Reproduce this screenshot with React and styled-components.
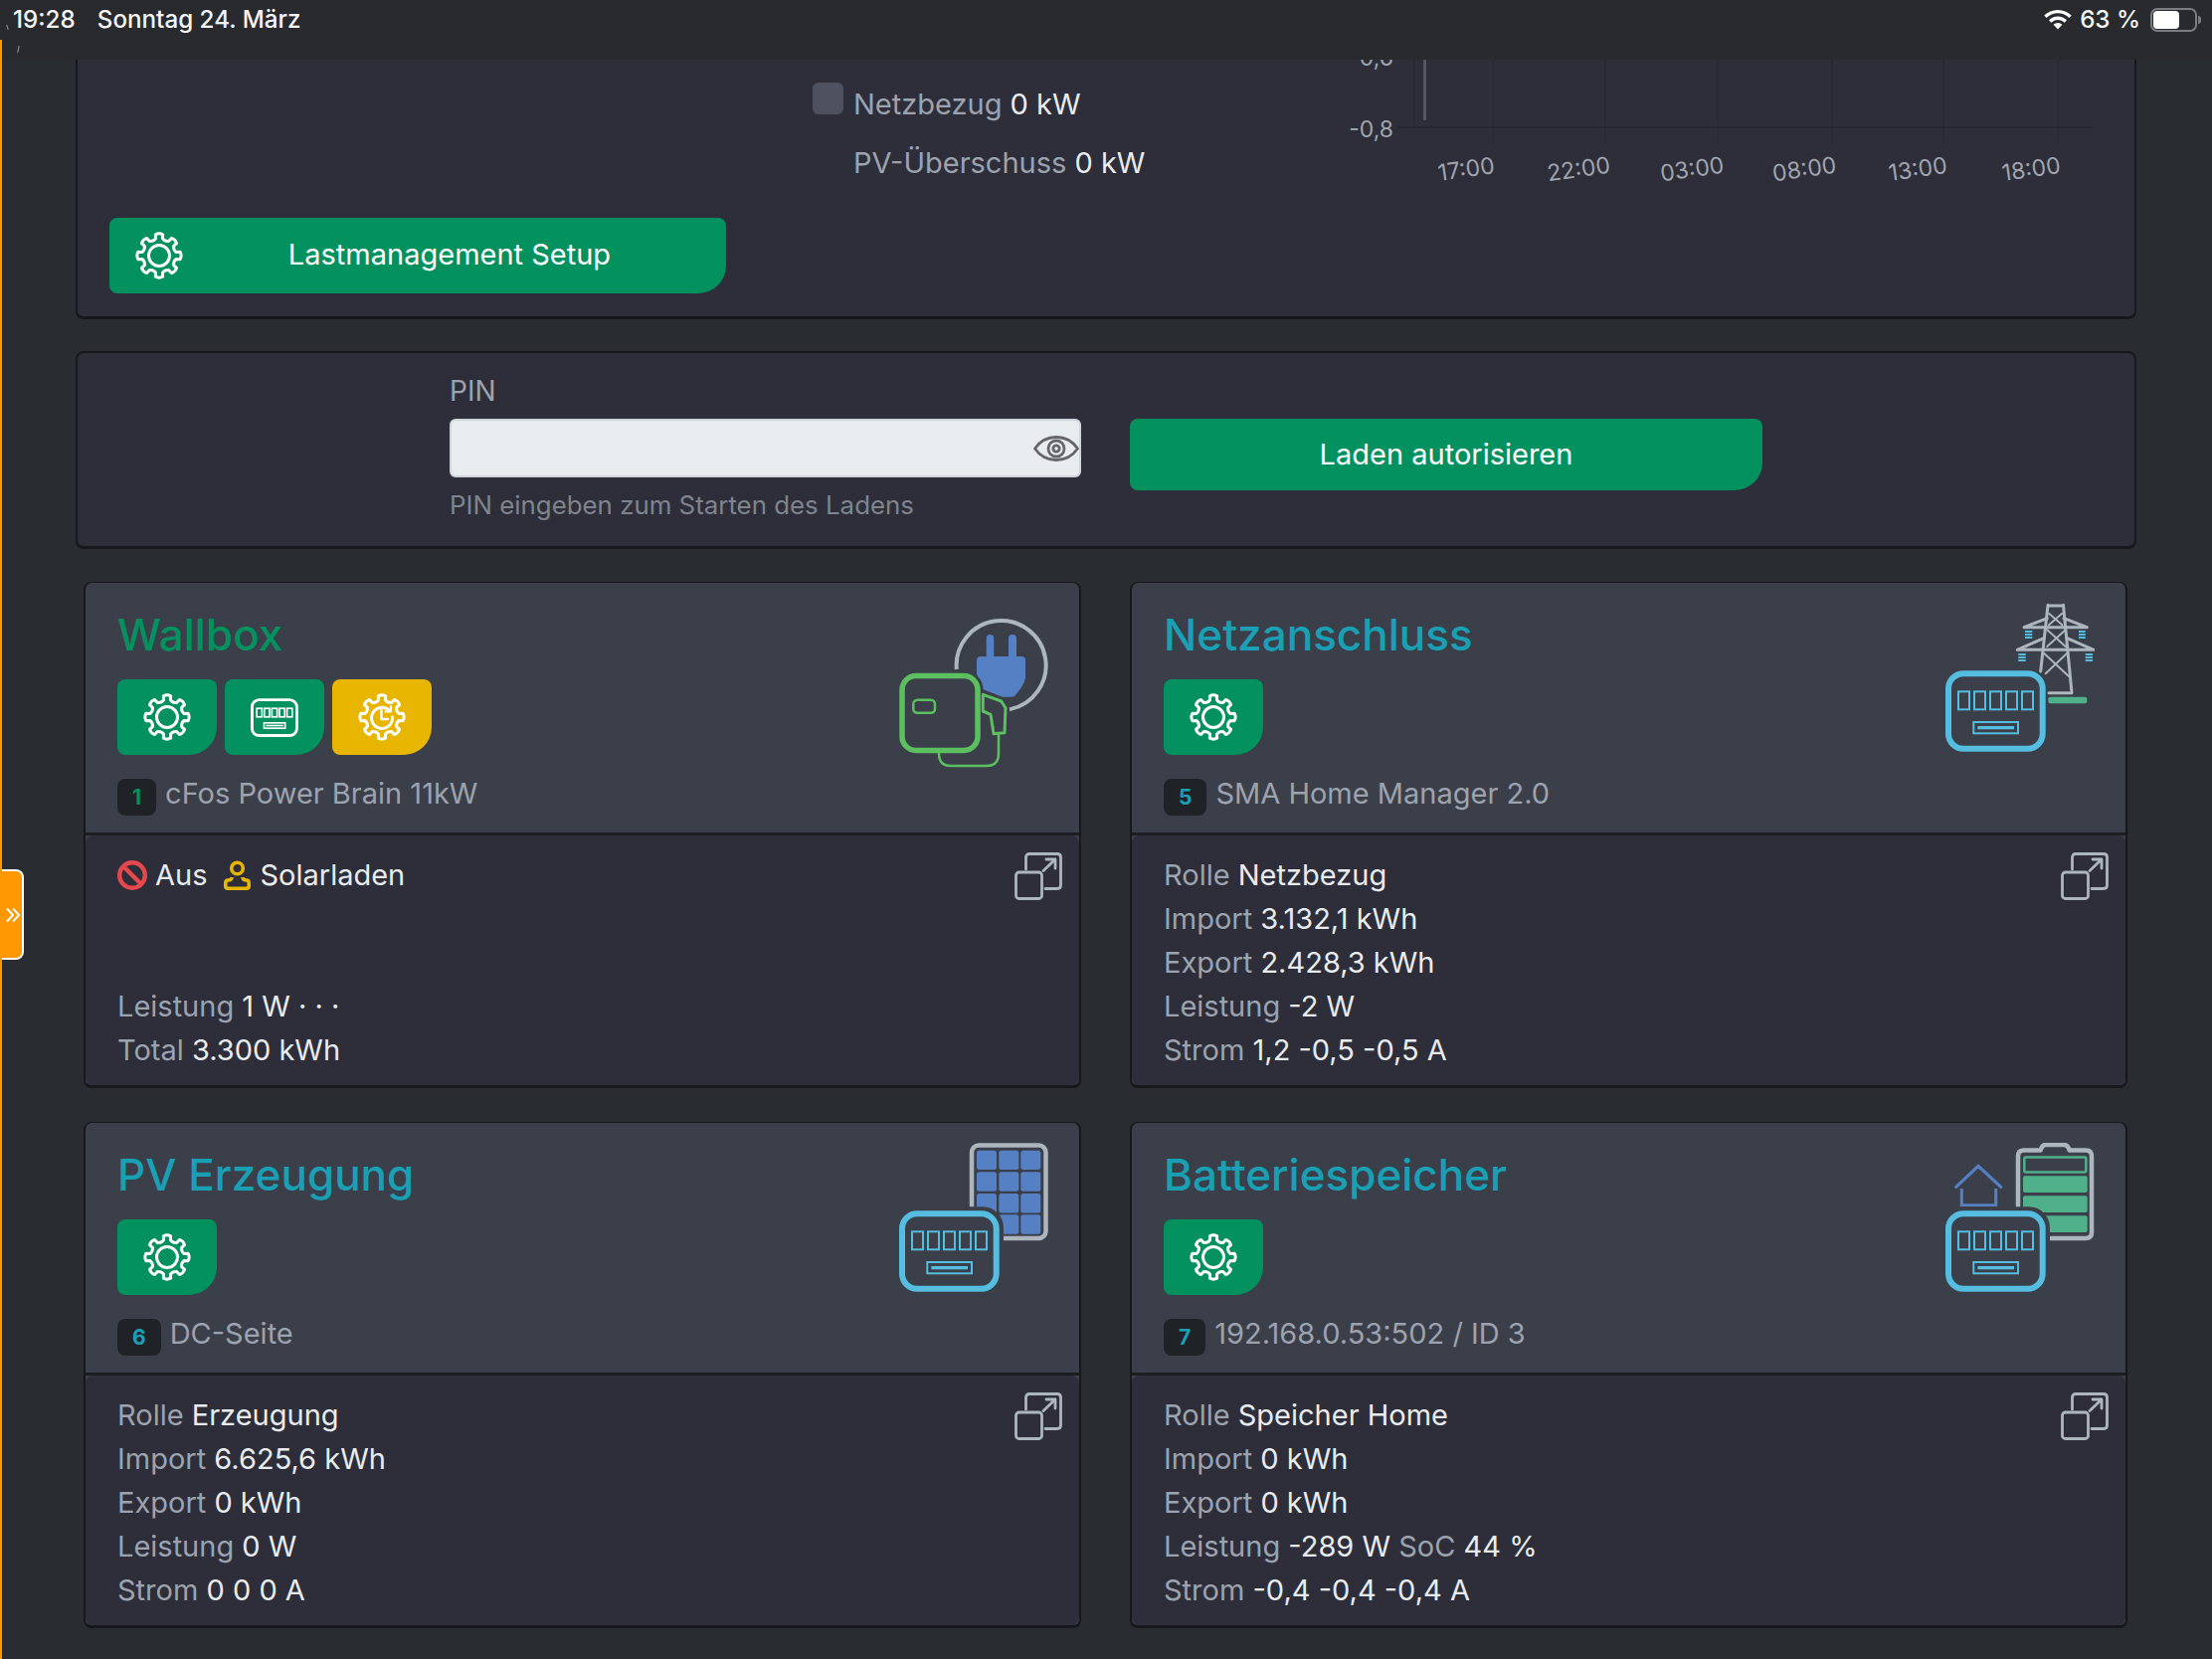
import React from 'react';
import styled, { createGlobalStyle } from 'styled-components';

const GREEN = '#03915f';
const TEAL = '#1aa0b5';
const YELLOW = '#e8b600';
const HEADER_BG = '#3b3f4a';
const GRAY_ICON = '#adb5bd';
const METER_BLUE = '#55bde0';
const PLUG_BLUE = '#5580c4';
const BATTERY_GREEN = '#50b08a';
const EDGE = '#16181b';

const GlobalStyle = createGlobalStyle`
  html, body {
    margin: 0;
    background: #292c30;
    color: #e9ecef;
    font-family: Inter, "Noto Sans", "Liberation Sans", sans-serif;
    font-size: 29px;
    line-height: 44px;
  }
  * {
    box-sizing: border-box;
  }
`;

const StatusBar = styled.header`
  position: relative;
  height: 60px;
  background: #282a2e;
  padding: 0 15px 20px 13px;
  display: flex;
  align-items: center;
  justify-content: space-between;
  color: #f5f5f5;
  font-size: 24.2px;
  line-height: 40px;
  font-weight: 500;

  &::before,
  &::after {
    content: '';
    position: absolute;
    width: 1px;
    background: #9a9da1;
  }
  &::before {
    left: 7px;
    top: 25px;
    height: 5px;
    transform: rotate(-18deg);
  }
  &::after {
    left: 18px;
    top: 46px;
    height: 7px;
    transform: rotate(12deg);
  }
`;

const StatusGroup = styled.div`
  display: flex;
  align-items: center;
  gap: ${props => props.$gap}px;
`;

const BatteryShell = styled.div`
  position: relative;
  width: 47px;
  height: 24px;
  margin-left: 2px;
  border: 2px solid #7b7d81;
  border-radius: 7px;
  padding: 1px;

  &::after {
    content: '';
    position: absolute;
    right: -6px;
    top: 6px;
    width: 3px;
    height: 8px;
    border-radius: 0 3px 3px 0;
    background: #7b7d81;
  }
`;

const BatteryFill = styled.div`
  width: 63%;
  height: 100%;
  background: #fff;
  border-radius: 4px;
`;

const EdgeLine = styled.div`
  position: fixed;
  left: 0;
  top: 40px;
  bottom: 0;
  width: 2px;
  background: #ff9800;
  z-index: 3;
`;

const SidebarToggle = styled.div`
  position: fixed;
  left: 2px;
  top: 874px;
  width: 22px;
  height: 91px;
  background: #ff9800;
  border: 2px solid #fff;
  border-left: none;
  border-radius: 0 8px 8px 0;
  display: flex;
  align-items: center;
  justify-content: flex-end;
  padding-right: 1px;
  z-index: 3;
`;

const Main = styled.main`
  padding: 0 76px 32px;
`;

const Panel = styled.section`
  background: #2d2e39;
  border: 2px solid ${EDGE};
  border-top-width: ${props => (props.$clipped ? 0 : 2)}px;
  border-bottom-width: 3px;
  border-radius: ${props => (props.$clipped ? '0 0 8px 8px' : '8px')};
`;

const LoadPanel = styled(Panel)`
  height: 261px;
  padding: 0 16px 0 32px;
  margin-bottom: 32px;
`;

const LoadTop = styled.div`
  display: grid;
  grid-template-columns: 1230px 790px;
  height: 159px;
`;

const Legend = styled.div`
  padding: 23px 0 0 707px;
`;

const LegendRow = styled.div`
  display: flex;
  gap: 10px;
  margin-bottom: 15px;
`;

const LegendSwatch = styled.span`
  width: 31px;
  height: 32px;
  border-radius: 6px;
  background: ${props => props.$color};
`;

const Label = styled.span`
  color: #9ca3af;
`;

const Chart = styled.svg`
  display: block;
`;

const AxisLabel = styled.text`
  fill: #a0a5ae;
  font-size: 23px;
`;

const SetupButton = styled.div`
  width: 620px;
  height: 76px;
  background: ${GREEN};
  border-radius: 8px 8px 28px 8px;
  color: #fff;
  display: flex;
  align-items: center;
  padding: 0 10px 0 26px;
`;

const SetupText = styled.span`
  flex: 1;
  text-align: center;
  padding-bottom: 3px;
`;

const PinPanel = styled(Panel)`
  height: 199px;
  padding: 16px 0 0 374px;
  margin-bottom: 33px;
  display: flex;
  gap: 49px;
`;

const PinForm = styled.div`
  width: 635px;
`;

const PinLabel = styled.div`
  color: #9ca3af;
  font-size: 28px;
  margin-bottom: 6px;
`;

const PinInput = styled.div`
  height: 59px;
  background: #e9ecef;
  border: 2px solid #ced4da;
  border-radius: 6px;
  display: flex;
  align-items: center;
  justify-content: flex-end;
`;

const PinHint = styled.div`
  margin-top: 8px;
  color: #7f858e;
  font-size: 25.85px;
  line-height: 40px;
`;

const AuthButton = styled.div`
  width: 636px;
  height: 72px;
  margin-top: 50px;
  background: ${GREEN};
  border-radius: 8px 8px 28px 8px;
  color: #fff;
  display: flex;
  align-items: center;
  justify-content: center;
`;

const CardGrid = styled.div`
  display: grid;
  grid-template-columns: 1003px 1003px;
  column-gap: 49px;
  row-gap: 34px;
  margin: 0 9px 0 8px;
`;

const Card = styled.article`
  height: 509px;
  background: ${HEADER_BG};
  border: 2px solid ${EDGE};
  border-top-width: 1px;
  border-bottom-width: 3px;
  border-radius: 8px;
  display: flex;
  flex-direction: column;
`;

const CardHeader = styled.div`
  height: 254px;
  flex: none;
  padding: 20px 31px 0 32px;
  display: flex;
  justify-content: space-between;
  align-items: flex-start;
  border-bottom: 3px solid #1b1d21;
`;

const CardTitle = styled.h2`
  margin: 6px 0 18px;
  font-size: 44px;
  line-height: 53px;
  font-weight: 500;
  color: ${props => props.$color};
`;

const ButtonRow = styled.div`
  display: flex;
  gap: 8px;
`;

const IconButton = styled.div`
  width: 100px;
  height: 76px;
  background: ${props => props.$color};
  border-radius: 8px 8px 28px 8px;
  color: #fff;
  display: flex;
  align-items: center;
  justify-content: center;
`;

const DeviceRow = styled.div`
  display: flex;
  gap: 9px;
  margin-top: 17px;
  color: #9ca3af;
`;

const IdBadge = styled.span`
  margin-top: 7px;
  height: 37px;
  padding: 0 15px;
  background: #1f2328;
  border-radius: 8px;
  color: ${props => props.$color};
  font-size: 21px;
  line-height: 37px;
  font-weight: 700;
`;

const CardBody = styled.div`
  flex: 1;
  background: #2d2e39;
  border-radius: 8px;
  padding: 18px 17px 0 32px;
  display: flex;
  justify-content: space-between;
  align-items: flex-start;
`;

const Lines = styled.div`
  display: flex;
  flex-direction: column;
  height: 220px;
`;

const StateLine = styled.div`
  display: flex;
  align-items: center;
  height: 44px;
`;

const StateIcon = styled.svg`
  display: block;
  margin-right: ${props => props.$gap}px;
`;

const StateText = styled.span`
  margin-right: ${props => props.$gap}px;
`;

const Filler = styled.div`
  flex: 1;
`;

const Icon = styled.svg`
  display: block;
  flex: none;
`;

const PopoutIcon = styled(Icon)`
  margin-top: -1px;
`;

const gearPath = (cx, cy, outer, root, n = 8) => {
  const step = (Math.PI * 2) / n;
  const pt = (r, a) => `${(cx + r * Math.cos(a)).toFixed(2)} ${(cy + r * Math.sin(a)).toFixed(2)}`;
  let d = '';
  for (let i = 0; i < n; i++) {
    const a = i * step - Math.PI / 2;
    d += `${i ? 'L' : 'M'}${pt(root, a - 0.2)} L${pt(outer, a - 0.17)} Q${pt(outer + 1.6, a)} ${pt(outer, a + 0.17)} L${pt(root, a + 0.2)} `;
    d += `Q${pt(root - 2.2, a + step / 2)} ${pt(root, a + step - 0.2)} `;
  }
  return d + 'Z';
};

const GearIcon = () => (
  <Icon width="48" height="48" viewBox="0 0 48 48" fill="none" stroke="currentColor" strokeWidth="3" strokeLinejoin="round">
    <path d={gearPath(24, 24, 21.5, 17.5)} />
    <circle cx="24" cy="24" r="10.5" />
  </Icon>
);

const GearClockIcon = () => (
  <Icon width="48" height="48" viewBox="0 0 48 48" fill="none" stroke="currentColor" strokeWidth="3" strokeLinejoin="round" strokeLinecap="round">
    <path d={gearPath(24, 24, 21.5, 17.5)} />
    <path d="M31.5 17.5 A10.5 10.5 0 1 0 34.5 24" />
    <path d="M33 13 V18.5 H27.5" strokeWidth="2.2" />
    <path d="M23.5 17 V26 H30" strokeWidth="2.4" />
  </Icon>
);

const MeterShape = ({ color, halo, digit = 2, y = 0 }) => (
  <g transform={`translate(0 ${y})`} fill="none" stroke={color}>
    {halo && <rect x="-1" y="-1" width="103" height="83" rx="18" fill={HEADER_BG} stroke={HEADER_BG} strokeWidth="6" />}
    <rect x="3" y="3" width="94.7" height="75.4" rx="15" strokeWidth="6" />
    {[13, 29, 45, 61, 77].map(x => (
      <rect key={x} x={x} y="21" width="11" height="18" strokeWidth={digit} />
    ))}
    <rect x="28.3" y="51.7" width="44.7" height="11.3" strokeWidth={digit} />
    <rect x="32.3" y="55.7" width="36.7" height="3.3" fill={color} stroke="none" />
  </g>
);

const SmallMeterIcon = () => (
  <Icon width="48" height="39" viewBox="0 0 101 81">
    <MeterShape color="#fff" digit={3.5} />
  </Icon>
);

const PopIcon = () => (
  <PopoutIcon width="48" height="48" viewBox="0 0 48 48" fill="none" stroke={GRAY_ICON} strokeWidth="2.8" strokeLinecap="round" strokeLinejoin="round">
    <rect x="1.5" y="20" width="26" height="26.5" rx="3" />
    <path d="M11.5 17 V5 Q11.5 1.5 15 1.5 H43 Q46.5 1.5 46.5 5 V33 Q46.5 36.5 43 36.5 H31" />
    <path d="M29 18.5 L41 7 M32 7 H41 V16" />
  </PopoutIcon>
);

const WallboxIcon = () => (
  <Icon width="150" height="170" viewBox="0 0 150 170" fill="none">
    <path d="M57.8 67 A45 45 0 1 1 111 107.2" stroke={GRAY_ICON} strokeWidth="4" />
    <rect x="87.7" y="32" width="7.6" height="26" rx="3.8" fill={PLUG_BLUE} />
    <rect x="110" y="32" width="8" height="26" rx="4" fill={PLUG_BLUE} />
    <path d="M82 54 H123 Q127 54 127 58 V76 Q125 84 116 94 Q114 95 104 94.7 L84 87 L78 72 V58 Q78 54 82 54 Z" fill={PLUG_BLUE} />
    <rect x="3" y="73.5" width="76" height="75" rx="14" stroke={HEADER_BG} strokeWidth="11" />
    <rect x="3" y="73.5" width="76" height="75" rx="14" stroke="#5cbf60" strokeWidth="5.5" fill={HEADER_BG} />
    <rect x="14.3" y="97.7" width="21.7" height="13" rx="4" stroke="#5cbf60" strokeWidth="2.5" />
    <path d="M84.3 92.3 L102.7 99 L107 105.7 L106 130.7 L95 131.7 L92 112.3 L84.3 109 Z" fill={HEADER_BG} stroke="#5cbf60" strokeWidth="3" strokeLinejoin="round" />
    <path d="M100 132 V152 Q100 164 88 164 H52 Q40 164 40 152 V150" stroke="#5cbf60" strokeWidth="2.5" />
  </Icon>
);

const GridIcon = () => (
  <Icon width="150" height="150" viewBox="0 0 150 150" fill="none">
    <g stroke={GRAY_ICON} strokeWidth="3" strokeLinecap="round" strokeLinejoin="round">
      <path d="M104 3 H117.5" />
      <path d="M103 2.3 L95.7 69 M118.5 2.3 L127 90.7 H104" />
      <path d="M102.3 15.7 L79 24.7 H142.3 L119 15.7" />
      <path d="M99 35.7 L72.3 47.3 H149 L122.3 35.7" />
      <path d="M104 10.7 L117.3 22.3 M117.3 10.7 L104 22.3" strokeWidth="2" />
      <path d="M102.3 27.3 L120.7 44 M120.7 27.3 L102.3 44" strokeWidth="2" />
      <path d="M99 50.7 L124 74 M122.3 50.7 L100.7 71.3" strokeWidth="2" />
    </g>
    <g stroke={METER_BLUE} strokeWidth="1.8">
      {[[80, 87.3, 29], [134, 140.7, 29], [73.3, 80.7, 52], [140.7, 148, 52]].map(([a, b, y]) => (
        <path key={a} d={`M${a} ${y} H${b} M${a} ${y + 3} H${b} M${a} ${y + 6} H${b}`} />
      ))}
    </g>
    <rect x="103.3" y="94.7" width="39" height="6.6" rx="2" fill={BATTERY_GREEN} />
    <MeterShape color={METER_BLUE} y={68.3} />
  </Icon>
);

const SolarIcon = () => (
  <Icon width="150" height="150" viewBox="0 0 150 150" fill="none">
    <rect x="73" y="2.5" width="74.5" height="93.5" rx="7" stroke={GRAY_ICON} strokeWidth="4.5" />
    {[78, 100.3, 122.3].map(x =>
      [7.7, 29.3, 51, 72.3].map(y => (
        <rect key={`${x}-${y}`} x={x} y={y} width="20" height="19.4" rx="2.5" fill={PLUG_BLUE} />
      ))
    )}
    <MeterShape color={METER_BLUE} halo y={68.3} />
  </Icon>
);

const BatteryIcon = () => (
  <Icon width="150" height="150" viewBox="0 0 150 150" fill="none">
    <path d="M95.7 7.5 Q97 2 101 2 H119 Q123 2 124.7 7.5 H141 Q147 7.5 147 13.5 V90 Q147 96 141 96 H79 Q73 96 73 90 V13.5 Q73 7.5 79 7.5 Z" stroke={GRAY_ICON} strokeWidth="4.5" strokeLinejoin="round" />
    <rect x="79.3" y="14.5" width="62" height="15" rx="1.5" stroke={BATTERY_GREEN} strokeWidth="2.5" />
    {[33.3, 53.3, 73.3].map(y => (
      <rect key={y} x="78" y={y} width="64.7" height="16.7" rx="2" fill={BATTERY_GREEN} />
    ))}
    <path d="M10.7 44.3 L33 23.3 L55.7 44.3" stroke={PLUG_BLUE} strokeWidth="3.2" strokeLinecap="round" strokeLinejoin="round" />
    <path d="M16.3 46 V62.7 H50.7 V46" stroke={PLUG_BLUE} strokeWidth="3" />
    <MeterShape color={METER_BLUE} halo y={68.3} />
  </Icon>
);

const WifiIcon = () => (
  <Icon width="28" height="20" viewBox="0 0 28 20" fill="#fff">
    <path d="M14 0 C8.6 0 3.8 2.1 0.3 5.6 L2.6 8 C5.5 5.1 9.5 3.3 14 3.3 C18.5 3.3 22.5 5.1 25.4 8 L27.7 5.6 C24.2 2.1 19.4 0 14 0 Z" />
    <path d="M14 6.6 C10.5 6.6 7.3 8 5 10.3 L7.3 12.7 C9 11 11.4 9.9 14 9.9 C16.6 9.9 19 11 20.7 12.7 L23 10.3 C20.7 8 17.5 6.6 14 6.6 Z" />
    <path d="M14 13 C12.3 13 10.8 13.7 9.6 14.8 L14 19.6 L18.4 14.8 C17.2 13.7 15.7 13 14 13 Z" />
  </Icon>
);

const EyeIcon = () => (
  <Icon width="46" height="26" viewBox="0 0 46 26" fill="none" stroke="#66666a" strokeWidth="2.8">
    <path d="M1.5 13 C7 5 14 1.5 23 1.5 C32 1.5 39 5 44.5 13 C39 21 32 24.5 23 24.5 C14 24.5 7 21 1.5 13 Z" strokeLinejoin="round" />
    <circle cx="23" cy="13" r="8" />
    <circle cx="23" cy="13" r="3.2" />
  </Icon>
);

const ChevronsIcon = () => (
  <Icon width="15" height="14" viewBox="0 0 15 14" fill="none" stroke="#fff" strokeWidth="2" strokeLinecap="round" strokeLinejoin="round">
    <path d="M1.5 1 L7 7 L1.5 13 M7.5 1 L13 7 L7.5 13" />
  </Icon>
);

const LoadChart = () => (
  <Chart width="790" height="159" viewBox="0 0 790 159" fill="none">
    <path d="M82 0 V68" stroke="#292a33" strokeWidth="1.5" />
    {[161, 274, 387, 502, 614, 729].map(x => (
      <path key={x} d={`M${x} 0 V83`} stroke="#292a33" strokeWidth="1.5" />
    ))}
    <path d="M66 68 H763" stroke="#26272f" strokeWidth="2" />
    <rect x="91" y="0" width="3" height="61" fill="#55565f" />
    <AxisLabel x="61" y="6" textAnchor="end">-0,6</AxisLabel>
    <AxisLabel x="61" y="78" textAnchor="end">-0,8</AxisLabel>
    {[['17:00', 134], ['22:00', 247], ['03:00', 361], ['08:00', 474], ['13:00', 588], ['18:00', 702]].map(([t, x]) => (
      <AxisLabel key={t} x={x} y="118" textAnchor="middle" transform={`rotate(-8 ${x} 109)`}>{t}</AxisLabel>
    ))}
  </Chart>
);

const Row = ({ label, children }) => (
  <div>
    <Label>{label}</Label> {children}
  </div>
);

const DeviceCard = ({ title, color, id, device, icon, buttons, children }) => (
  <Card>
    <CardHeader>
      <div>
        <CardTitle $color={color}>{title}</CardTitle>
        <ButtonRow>{buttons}</ButtonRow>
        <DeviceRow>
          <IdBadge $color={color}>{id}</IdBadge>
          {device}
        </DeviceRow>
      </div>
      {icon}
    </CardHeader>
    <CardBody>
      <Lines>{children}</Lines>
      <PopIcon />
    </CardBody>
  </Card>
);

const App = () => (
  <>
    <GlobalStyle />
    <EdgeLine />
    <SidebarToggle>
      <ChevronsIcon />
    </SidebarToggle>
    <StatusBar>
      <StatusGroup $gap={22}>
        <span>19:28</span>
        <span>Sonntag 24. März</span>
      </StatusGroup>
      <StatusGroup $gap={8}>
        <WifiIcon />
        <span>63 %</span>
        <BatteryShell>
          <BatteryFill />
        </BatteryShell>
      </StatusGroup>
    </StatusBar>
    <Main>
      <LoadPanel $clipped>
        <LoadTop>
          <Legend>
            <LegendRow>
              <LegendSwatch $color="#4f515e" />
              <Row label="Netzbezug">0 kW</Row>
            </LegendRow>
            <LegendRow>
              <LegendSwatch $color="transparent" />
              <Row label="PV-Überschuss">0 kW</Row>
            </LegendRow>
          </Legend>
          <LoadChart />
        </LoadTop>
        <SetupButton>
          <GearIcon />
          <SetupText>Lastmanagement Setup</SetupText>
        </SetupButton>
      </LoadPanel>

      <PinPanel>
        <PinForm>
          <PinLabel>PIN</PinLabel>
          <PinInput>
            <EyeIcon />
          </PinInput>
          <PinHint>PIN eingeben zum Starten des Ladens</PinHint>
        </PinForm>
        <AuthButton>Laden autorisieren</AuthButton>
      </PinPanel>

      <CardGrid>
        <DeviceCard
          title="Wallbox"
          color={GREEN}
          id="1"
          device="cFos Power Brain 11kW"
          icon={<WallboxIcon />}
          buttons={
            <>
              <IconButton $color={GREEN}><GearIcon /></IconButton>
              <IconButton $color={GREEN}><SmallMeterIcon /></IconButton>
              <IconButton $color={YELLOW}><GearClockIcon /></IconButton>
            </>
          }
        >
          <StateLine>
            <StateIcon $gap={8} width="30" height="30" viewBox="0 0 30 30" fill="none" stroke="#e5484d" strokeWidth="4.4">
              <circle cx="15" cy="15" r="12.8" />
              <path d="M6 6 L24 24" />
            </StateIcon>
            <StateText $gap={17}>Aus</StateText>
            <StateIcon $gap={9} width="27" height="30" viewBox="0 0 27 30" fill="none" stroke={YELLOW} strokeWidth="3.6">
              <circle cx="13.5" cy="8" r="5.8" />
              <path d="M8 17 C8 20 5 20 4 20 Q1.8 20 1.8 23 V26 Q1.8 28.2 4 28.2 H23 Q25.2 28.2 25.2 26 V23 Q25.2 20 23 20 C22 20 19 20 19 17" strokeLinejoin="round" />
            </StateIcon>
            <span>Solarladen</span>
          </StateLine>
          <Filler />
          <Row label="Leistung">1 W · · ·</Row>
          <Row label="Total">3.300 kWh</Row>
        </DeviceCard>

        <DeviceCard
          title="Netzanschluss"
          color={TEAL}
          id="5"
          device="SMA Home Manager 2.0"
          icon={<GridIcon />}
          buttons={<IconButton $color={GREEN}><GearIcon /></IconButton>}
        >
          <Row label="Rolle">Netzbezug</Row>
          <Row label="Import">3.132,1 kWh</Row>
          <Row label="Export">2.428,3 kWh</Row>
          <Row label="Leistung">-2 W</Row>
          <Row label="Strom">1,2 -0,5 -0,5 A</Row>
        </DeviceCard>

        <DeviceCard
          title="PV Erzeugung"
          color={TEAL}
          id="6"
          device="DC-Seite"
          icon={<SolarIcon />}
          buttons={<IconButton $color={GREEN}><GearIcon /></IconButton>}
        >
          <Row label="Rolle">Erzeugung</Row>
          <Row label="Import">6.625,6 kWh</Row>
          <Row label="Export">0 kWh</Row>
          <Row label="Leistung">0 W</Row>
          <Row label="Strom">0 0 0 A</Row>
        </DeviceCard>

        <DeviceCard
          title="Batteriespeicher"
          color={TEAL}
          id="7"
          device="192.168.0.53:502 / ID 3"
          icon={<BatteryIcon />}
          buttons={<IconButton $color={GREEN}><GearIcon /></IconButton>}
        >
          <Row label="Rolle">Speicher Home</Row>
          <Row label="Import">0 kWh</Row>
          <Row label="Export">0 kWh</Row>
          <Row label="Leistung">-289 W <Label>SoC</Label> 44 %</Row>
          <Row label="Strom">-0,4 -0,4 -0,4 A</Row>
        </DeviceCard>
      </CardGrid>
    </Main>
  </>
);

export default App;
